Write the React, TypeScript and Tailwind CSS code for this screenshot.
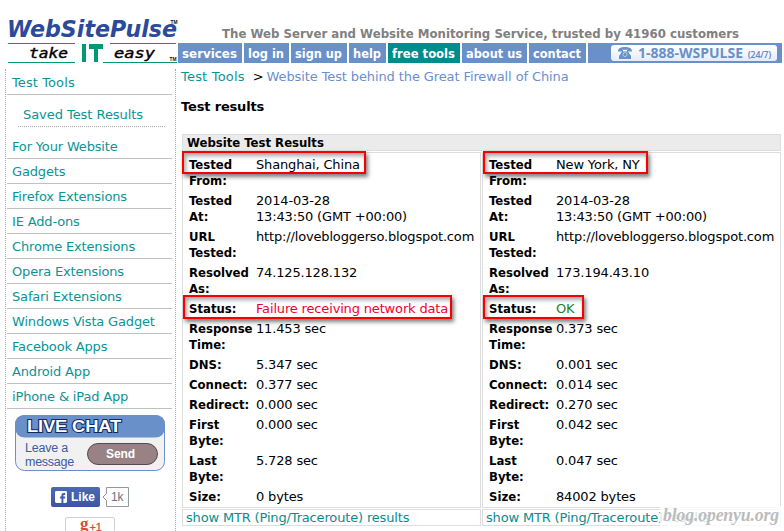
const navItems = [
  { label: "services", box: "w-16 bg-[#6990c9]", len: 55 },
  { label: "log in", box: "w-[45px] bg-[#6990c9]", len: 36 },
  { label: "sign up", box: "w-14 bg-[#6990c9]", len: 47 },
  { label: "help", box: "w-[37px] bg-[#6990c9]", len: 28 },
  { label: "free tools", box: "w-[72px] bg-[#008c8c]", len: 63 },
  { label: "about us", box: "w-[65px] bg-[#6990c9]", len: 56 },
  { label: "contact", box: "w-[57px] bg-[#6990c9]", len: 48 },
];

const sideLinks = [
  "For Your Website",
  "Gadgets",
  "Firefox Extensions",
  "IE Add-ons",
  "Chrome Extensions",
  "Opera Extensions",
  "Safari Extensions",
  "Windows Vista Gadget",
  "Facebook Apps",
  "Android App",
  "iPhone & iPad App",
];

type Row = { label: string[]; value: string[]; color?: string };

function buildRows(ip: string, status: string, color: string, t: string[]): Row[] {
  return [
    { label: ["Tested", "At:"], value: ["2014-03-28", "13:43:50 (GMT +00:00)"] },
    { label: ["URL", "Tested:"], value: ["http://lovebloggerso.blogspot.com"] },
    { label: ["Resolved", "As:"], value: [ip] },
    { label: ["Status:"], value: [status], color },
    { label: ["Response", "Time:"], value: [t[0]] },
    { label: ["DNS:"], value: [t[1]] },
    { label: ["Connect:"], value: [t[2]] },
    { label: ["Redirect:"], value: [t[3]] },
    { label: ["First", "Byte:"], value: [t[4]] },
    { label: ["Last", "Byte:"], value: [t[5]] },
    { label: ["Size:"], value: [t[6]] },
  ];
}

const shanghai: Row[] = [
  { label: ["Tested", "From:"], value: ["Shanghai, China"] },
  ...buildRows("74.125.128.132", "Failure receiving network data", "text-[#f0002d]", [
    "11.453 sec", "5.347 sec", "0.377 sec", "0.000 sec", "0.000 sec", "5.728 sec", "0 bytes",
  ]),
];

const newYork: Row[] = [
  { label: ["Tested", "From:"], value: ["New York, NY"] },
  ...buildRows("173.194.43.10", "OK", "text-[#228022]", [
    "0.373 sec", "0.001 sec", "0.014 sec", "0.270 sec", "0.042 sec", "0.047 sec", "84002 bytes",
  ]),
];

const bold = "font-['DejaVu_Sans_Condensed','DejaVu_Sans',sans-serif] font-bold [font-stretch:condensed] tracking-normal";

function Logo() {
  return (
    <svg width="178" height="49" viewBox="0 0 178 49" className="block overflow-visible">
      <text x="7" y="22" textLength="170" lengthAdjust="spacingAndGlyphs" fontFamily="DejaVu Sans, sans-serif" fontWeight="bold" fontStyle="oblique" fontSize="22.500" fill="#2b4a9b">WebSitePulse</text>
      <text x="170.500" y="8.500" textLength="7" lengthAdjust="spacingAndGlyphs" fontFamily="Liberation Sans, sans-serif" fontWeight="bold" fontSize="5.500" fill="#111">TM</text>
      <path d="M8 28.500H75M110 28.500H176M8 47.500H75M103 47.500H177" stroke="#009973" />
      <path d="M82 29h4v18h-4zM89 29h14v5h-5v13h-4v-13h-5z" fill="#009973" />
      <text x="29" y="43" textLength="39" lengthAdjust="spacingAndGlyphs" fontFamily="DejaVu Sans Mono, monospace" fontStyle="oblique" fontSize="14.500" fill="#000" stroke="#000" strokeWidth=".4">take</text>
      <text x="114" y="43" textLength="41" lengthAdjust="spacingAndGlyphs" fontFamily="DejaVu Sans Mono, monospace" fontStyle="oblique" fontSize="14.500" fill="#000" stroke="#000" strokeWidth=".4">easy</text>
      <text x="169.500" y="45.500" textLength="7" lengthAdjust="spacingAndGlyphs" fontFamily="Liberation Sans, sans-serif" fontWeight="bold" fontSize="5.500" fill="#111">TM</text>
    </svg>
  );
}

function PhoneBadge() {
  return (
    <div className="flex h-5 w-[194px] items-center justify-end bg-[#6990c9] pr-[5px]">
      <div className="h-4 w-[166px] rounded-[3px] bg-linear-to-b from-white to-[#e6ebf7]">
        <svg width="166" height="16" viewBox="0 0 166 16" className="block overflow-visible">
          <path d="M7 6.500C7 3 10 2 14 2s7 1 7 4.500h-4V4.700h-6v1.800z" fill="#6990c9" />
          <path d="M11 5h1v1.500h4V5h1v1.500l3 4.500v3H8v-3l3-4.500z" fill="#6990c9" />
          <circle cx="14" cy="9.500" r="2" fill="none" stroke="#eef2fa" strokeWidth="1" strokeDasharray="1 .6" />
          <text x="27" y="13.300" textLength="105" lengthAdjust="spacingAndGlyphs" fontFamily="Open Sans, sans-serif" fontWeight="bold" fontSize="14.500" fill="#6990c9">1-888-WSPULSE</text>
          <text x="137" y="12.500" textLength="23" lengthAdjust="spacingAndGlyphs" fontFamily="Open Sans, sans-serif" fontSize="9" fill="#5577bd" stroke="#5577bd" strokeWidth=".2">(24/7)</text>
        </svg>
      </div>
    </div>
  );
}

function LiveChat() {
  return (
    <svg width="150" height="56" viewBox="0 0 150 56" className="ml-[9px] mt-[6px] block">
      <rect x=".5" y=".5" width="149" height="55" rx="9" fill="#f1f1f1" stroke="#6990c9" />
      <path d="M0 10Q0 0 10 0H140Q150 0 150 10V13Q149 22.500 140 22.500H10Q1 22.500 0 13Z" fill="#6990c9" />
      <text x="12" y="17" textLength="94" lengthAdjust="spacingAndGlyphs" fontFamily="Liberation Sans, sans-serif" fontWeight="bold" fontSize="16.500" fill="#fff" stroke="#12275e" strokeWidth="2" paintOrder="stroke">LIVE CHAT</text>
      <text x="10" y="37" textLength="43" fontFamily="Liberation Sans, sans-serif" fontSize="12.500" fill="#3e5ba5">Leave a</text>
      <text x="10" y="51" textLength="49" fontFamily="Liberation Sans, sans-serif" fontSize="12.500" fill="#3e5ba5">message</text>
      <rect x="72.500" y="28.500" width="70" height="21" rx="10.500" fill="#988286" stroke="#554a4d" />
      <text x="91" y="43" textLength="29" fontFamily="Liberation Sans, sans-serif" fontWeight="bold" fontSize="12" fill="#fff">Send</text>
    </svg>
  );
}

function Social() {
  return (
    <div className="flex flex-col">
      <div className="ml-[45px] mt-4 flex">
        <div className="flex h-5 w-[49px] items-center rounded-[2px] bg-linear-to-b from-[#4c69ba] to-[#3b55a0] pl-1">
          <svg width="12" height="12" viewBox="0 0 13 13">
            <rect width="13" height="13" rx="1.500" fill="#fff" />
            <path d="M7 13V8H5.500V6H7V4.700C7 3 8 2.200 9.500 2.200H11V4.200H10C9.300 4.200 9.100 4.500 9.100 5V6H11L10.800 8H9.100V13Z" fill="#415dab" />
          </svg>
          <span className="ml-1 font-['Liberation_Sans',sans-serif] text-[12px] font-bold leading-4 tracking-normal text-white">Like</span>
        </div>
        <svg width="27" height="20" viewBox="0 0 27 20" className="ml-[2px]">
          <path d="M4.500 .5H26.500V19.500H4.500V13.500L1 10L4.500 6.500Z" fill="#fff" stroke="#9197a3" />
          <text x="9" y="14" fontFamily="Liberation Sans, sans-serif" fontSize="12" fill="#6a7180">1k</text>
        </svg>
      </div>
      <div className="ml-[59px] mt-[10px] flex h-5 w-[50px] rounded-[2px] border border-[#d0d0d0] bg-white">
        <svg width="48" height="18" viewBox="0 0 48 18">
          <text x="14" y="11" fontFamily="Liberation Serif, serif" fontWeight="bold" fontSize="17" fill="#dd4b39">g</text>
          <text x="23.500" y="12.500" fontFamily="Liberation Sans, sans-serif" fontSize="11" fill="#dd4b39" stroke="#dd4b39" strokeWidth=".3">+1</text>
        </svg>
      </div>
    </div>
  );
}

function Sidebar() {
  return (
    <aside className="ml-[5px] mt-[5px] h-[462px] w-[171px] shrink-0 border-x border-dotted border-[#a8a8a8] text-[13px] text-[#0a9494]">
      <div className="ml-px w-[165px]">
        <div className="h-[26px] border-b border-[#c0c0c0] pl-[5px] leading-[27px] tracking-[0.1px]">Test Tools</div>
        <div className="ml-[11px] h-8 w-[147px] border-b border-dotted border-[#aaa] pl-[5px] leading-[39px] tracking-[-0.05px]">Saved Test Results</div>
        <div className="h-[7px]" />
        {sideLinks.map((l) => (
          <div key={l} className="h-[25px] border-b border-[#c0c0c0] pl-[5px] leading-[25px]">{l}</div>
        ))}
      </div>
      <LiveChat />
      <Social />
    </aside>
  );
}

function Highlight({ size }: { size: string }) {
  return <div className={`pointer-events-none absolute border-2 border-[#f80000] shadow-[2px_3px_4px_rgba(0,0,0,0.5),inset_2px_3px_4px_rgba(0,0,0,0.35)] ${size}`} />;
}

function Result({ rows, first, status }: { rows: Row[]; first: string; status: string }) {
  return (
    <div className="relative flex h-[356px] min-w-0 flex-1 flex-col border border-[#ddd] bg-white px-[6px] pt-[2px]">
      {rows.map((r, i) => (
        <div key={i} className="flex py-[2px] leading-4">
          <div className={`w-[67px] shrink-0 ${bold} text-[13px]`}>
            {r.label.map((s) => <div key={s}>{s}</div>)}
          </div>
          <div className={`whitespace-nowrap ${r.color ?? "text-black"}`}>
            {r.value.map((s) => <div key={s}>{s}</div>)}
          </div>
        </div>
      ))}
      <Highlight size={first} />
      <Highlight size={status} />
    </div>
  );
}

export default function App() {
  return (
    <div className="relative flex h-[531px] w-[784px] flex-col overflow-hidden bg-white font-['DejaVu_Sans',sans-serif] text-[13px] tracking-[-0.16px]">
      <header className="flex h-16 shrink-0 items-start pt-[15px] tracking-normal">
        <Logo />
        <div className="flex flex-col">
          <svg width="600" height="28" className="block">
            <text x="44" y="23" textLength="517" lengthAdjust="spacingAndGlyphs" fontFamily="DejaVu Sans, sans-serif" fontWeight="bold" fontSize="12.500" fill="#808080">The Web Server and Website Monitoring Service, trusted by 41960 customers</text>
          </svg>
          <nav className="flex gap-[2px]">
            {navItems.map((n) => (
              <div key={n.label} className={`h-5 shrink-0 ${n.box}`}>
                <svg width="100%" height="20" className="block overflow-visible">
                  <text x="4" y="15" textLength={n.len} lengthAdjust="spacingAndGlyphs" fontFamily="DejaVu Sans, sans-serif" fontWeight="bold" fontSize="13" fill="#fff">{n.label}</text>
                </svg>
              </div>
            ))}
            <PhoneBadge />
          </nav>
        </div>
      </header>
      <div className="flex">
        <Sidebar />
        <main className="ml-[5px] mt-[5px] flex flex-col">
          <div className="h-4 whitespace-pre leading-4 tracking-[-0.11px] text-[#6a8fd0]">
            <span className="tracking-[0.2px] text-[#0a9494]">Test Tools</span>
            <span className="ml-[8px] mr-[3px] text-black">&gt;</span>
            <span>Website Test behind the Great Firewall of China</span>
          </div>
          <h1 className="mt-[14px] h-4 font-bold leading-4">Test results</h1>
          <section className="ml-px mt-[19px] flex w-[599px] flex-col">
            <div className={`h-[17px] border border-[#ddd] bg-[#ebebeb] pl-1 leading-4 ${bold}`}>Website Test Results</div>
            <div className="mt-px flex gap-px">
              <Result rows={shanghai} first="-left-px -top-[2px] h-[23px] w-[184px]" status="left-0 top-[142px] h-6 w-[269px]" />
              <Result rows={newYork} first="left-0 -top-[2px] h-[23px] w-[165px]" status="left-0 top-[142px] h-6 w-[101px]" />
            </div>
            <div className="mt-px flex gap-px leading-4 text-[#0a8c8c]">
              <div className="h-[17px] min-w-0 flex-1 border border-[#ddd] pl-[3px]">show MTR (Ping/Traceroute) results</div>
              <div className="h-[17px] min-w-0 flex-1 border border-[#ddd] pl-[3px]">show MTR (Ping/Traceroute) results</div>
            </div>
          </section>
        </main>
      </div>
      <div className="absolute left-[660px] top-[506px] h-[25px] w-[124px] bg-white/80">
        <svg width="124" height="25" className="block">
          <text x="3" y="14.500" textLength="116" lengthAdjust="spacingAndGlyphs" fontFamily="Liberation Serif, serif" fontStyle="italic" fontWeight="bold" fontSize="18" fill="#bcbcbc">blog.openyu.org</text>
        </svg>
      </div>
    </div>
  );
}
